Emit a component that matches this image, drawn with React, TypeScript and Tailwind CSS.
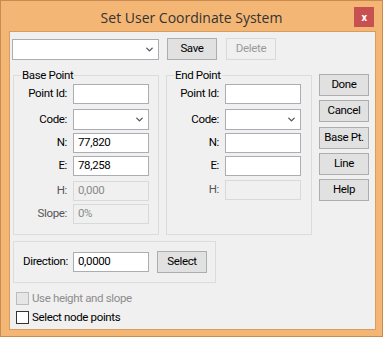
import { ChevronDown } from "lucide-react";

const font = "font-['Roboto','Open_Sans',sans-serif] tracking-[-0.35px]";

const TextBox = ({ value = "", disabled = false }: { value?: string; disabled?: boolean }) => (
  <div
    className={`w-[76px] h-[20px] border flex items-center px-[4px] text-[11.5px] leading-none ${
      disabled ? "bg-[#f0f0f0] border-[#d9d9d9] text-[#8a8a8a]" : "bg-white border-[#abadb3] text-black"
    }`}
  >
    {value}
  </div>
);

const Combo = ({ width }: { width: string }) => (
  <div className={`${width} h-[21px] bg-white border border-[#abadb3] flex items-center justify-end pr-[3px]`}>
    <ChevronDown size={11} strokeWidth={3} className="text-[#555]" />
  </div>
);

const Btn = ({ label, disabled = false, className = "" }: { label: string; disabled?: boolean; className?: string }) => (
  <div
    className={`w-[50px] h-[22px] border flex items-center justify-center text-[11.5px] ${
      disabled ? "bg-[#f0f0f0] border-[#d9d9d9] text-[#9a9a9a]" : "bg-[#e1e1e1] border-[#adadad] text-black"
    } ${className}`}
  >
    {label}
  </div>
);

const Row = ({ label, mt, labelW, children }: { label: string; mt: string; labelW: string; children: React.ReactNode }) => (
  <div className={`flex items-center ${mt}`}>
    <div className={`${labelW} text-right text-[11.5px] ${label === "H:" || label === "Slope:" ? "text-[#555]" : "text-black"}`}>
      {label}
    </div>
    <div className="ml-[6px]">{children}</div>
  </div>
);

const Group = ({ title, className, children }: { title?: string; className: string; children: React.ReactNode }) => (
  <div className={`relative border border-[#dcdcdc] ${className}`}>
    {title && (
      <span className="absolute left-[7px] top-[-9px] bg-[#f0f0f0] px-[1px] text-[11.5px] leading-[16px] text-black">
        {title}
      </span>
    )}
    {children}
  </div>
);

const Check = ({ label, disabled = false, mt }: { label: string; disabled?: boolean; mt: string }) => (
  <div className={`flex items-center ${mt} ml-[6px]`}>
    <div className={`w-[13px] h-[13px] border ${disabled ? "bg-[#e6e6e6] border-[#bcbcbc]" : "bg-white border-[#333]"}`} />
    <span className={`ml-[3px] text-[11.5px] leading-none ${disabled ? "text-[#8d8d8d]" : "text-black"}`}>{label}</span>
  </div>
);

export default function App() {
  return (
    <div className={`w-[384px] h-[339px] bg-white ${font}`}>
      <div className="w-[383px] h-[337px] bg-[#f3b675] border border-[#c88c50]">
        <div className="relative h-[30px] flex items-center justify-center">
          <span className="font-['Open_Sans',sans-serif] tracking-normal text-[14px] text-[#333] pt-[2px]">Set User Coordinate System</span>
          <div className="absolute right-[8px] top-[6px] w-[20px] h-[20px] bg-[#c75050] flex items-center justify-center text-white text-[11px] font-bold leading-none">
            x
          </div>
        </div>
        <div className="ml-[8px] w-[367px] h-[299px] bg-[#f0f0f0] border border-[#d69c60]">
          <div className="flex items-start pt-[6px] pl-[2px]">
            <div className="mt-[1px]">
              <Combo width="w-[147px]" />
            </div>
            <Btn label="Save" className="ml-[8px]" />
            <Btn label="Delete" disabled className="ml-[9px]" />
          </div>

          <div className="flex items-start ml-[3px] mt-[14px]">
            <Group title="Base Point" className="w-[146px] h-[160px] mt-[1px] pt-[8px]">
              <Row label="Point Id:" mt="" labelW="w-[53px]"><TextBox /></Row>
              <Row label="Code:" mt="mt-[5px]" labelW="w-[53px]"><Combo width="w-[76px]" /></Row>
              <Row label="N:" mt="mt-[3px]" labelW="w-[53px]"><TextBox value="77,820" /></Row>
              <Row label="E:" mt="mt-[3px]" labelW="w-[53px]"><TextBox value="78,258" /></Row>
              <Row label="H:" mt="mt-[5px]" labelW="w-[53px]"><TextBox value="0,000" disabled /></Row>
              <Row label="Slope:" mt="mt-[3px]" labelW="w-[53px]"><TextBox value="0%" disabled /></Row>
            </Group>
            <Group title="End Point" className="w-[146px] h-[160px] ml-[7px] mt-[1px] pt-[8px]">
              <Row label="Point Id:" mt="" labelW="w-[52px]"><TextBox /></Row>
              <Row label="Code:" mt="mt-[5px]" labelW="w-[52px]"><Combo width="w-[76px]" /></Row>
              <Row label="N:" mt="mt-[3px]" labelW="w-[52px]"><TextBox /></Row>
              <Row label="E:" mt="mt-[3px]" labelW="w-[52px]"><TextBox /></Row>
              <Row label="H:" mt="mt-[4px]" labelW="w-[52px]"><TextBox disabled /></Row>
            </Group>
            <div className="ml-[7px] flex flex-col">
              <Btn label="Done" />
              <Btn label="Cancel" className="mt-[4px]" />
              <Btn label="Base Pt." className="mt-[5px]" />
              <Btn label="Line" className="mt-[4px]" />
              <Btn label="Help" className="mt-[4px]" />
            </div>
          </div>

          <Group className="ml-[3px] mt-[6px] w-[203px] h-[42px] flex items-center">
            <span className="ml-[9px] w-[45px] text-[11.5px] text-black">Direction:</span>
            <div className="ml-[5px]"><TextBox value="0,0000" /></div>
            <Btn label="Select" className="ml-[8px]" />
          </Group>

          <Check label="Use height and slope" disabled mt="mt-[9px]" />
          <Check label="Select node points" mt="mt-[6px]" />
        </div>
      </div>
    </div>
  );
}
